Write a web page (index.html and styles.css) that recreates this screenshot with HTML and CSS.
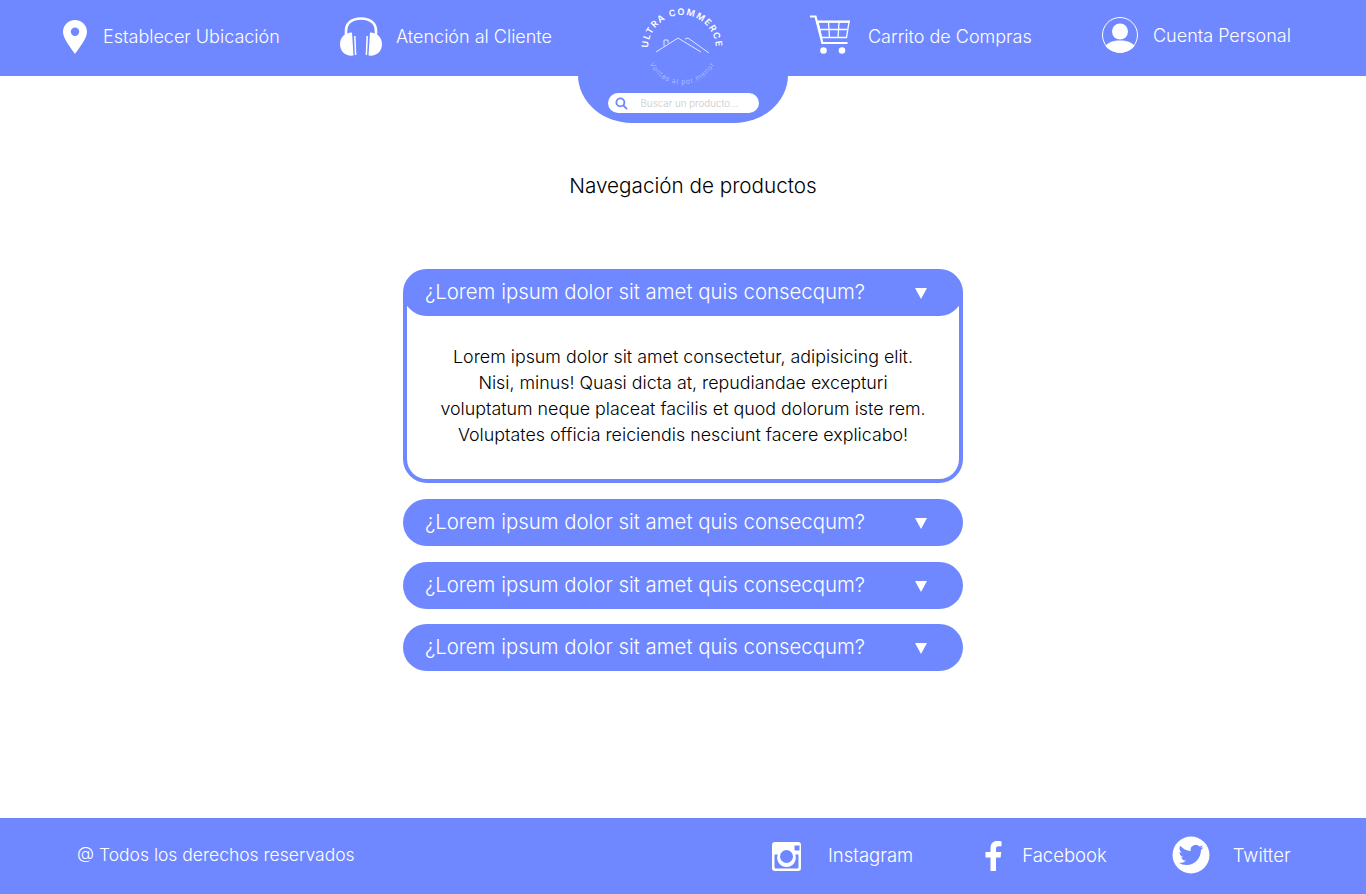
FILE: index.html
```html
<!DOCTYPE html>
<html lang="es">
<head>
  <meta charset="UTF-8">
  <meta name="viewport" content="width=device-width, initial-scale=1.0">
  <title>Ultra Commerce</title>
  <link rel="stylesheet" href="styles.css">
</head>
<body>
  <header class="topbar">
    <a class="topbar-item" href="#">
      <svg class="icon-pin" viewBox="0 0 24 34"><path fill="#fff" fill-rule="evenodd" d="M12 0C5.2 0 0 5.2 0 11.8 0 18.6 7.500 27.500 12 34c4.500-6.500 12-15.400 12-22.200C24 5.200 18.800 0 12 0zm0 7.500a4.200 4.200 0 1 1 0 8.400 4.200 4.200 0 0 1 0-8.400z"/></svg>
      <span>Establecer Ubicación</span>
    </a>
    <a class="topbar-item" href="#">
      <svg class="icon-phones" viewBox="0 0 42 39">
        <path fill="none" stroke="#fff" stroke-width="2.600" d="M6 20V14C6 6 12 1.500 21 1.500S36 6 36 14v6"/>
        <path fill="#fff" d="M12 15.500l1.500 23C5.500 39.500 0 34.500 0 27c0-6.500 5-11.500 12-11.500zM30 15.500l-1.500 23c8 1 13.500-4 13.500-11.500 0-6.500-5-11.500-12-11.500z"/>
        <path fill="none" stroke="#fff" stroke-width="1.500" d="M14.800 19l.8 19M27.200 19l-.8 19"/>
      </svg>
      <span>Atención al Cliente</span>
    </a>
    <div class="brand">
      <svg class="logo" viewBox="0 0 90 82">
        <defs>
          <path id="arcTop" d="M10 45a34 34 0 0 1 68 0"/>
          <path id="arcBottom" d="M10 56a36 36 0 0 0 68 0"/>
        </defs>
        <text class="logo-name"><textPath href="#arcTop" startOffset="50%" text-anchor="middle">ULTRA COMMERCE</textPath></text>
        <text class="logo-tag"><textPath href="#arcBottom" startOffset="50%" text-anchor="middle">Ventas al por menor</textPath></text>
        <path fill="none" stroke="#fff" stroke-width=".8" d="M18 48l22-14 23 14M47 35l3-1 21 15M26 42v-6h4v3"/>
      </svg>
      <div class="search">
        <svg class="icon-search" viewBox="0 0 14 14"><circle cx="5.800" cy="5.800" r="4.300" fill="none" stroke="#6f88ff" stroke-width="2"/><path stroke="#6f88ff" stroke-width="2" stroke-linecap="round" d="M9.200 9.200l3.300 3.300"/></svg>
        <input type="text" placeholder="Buscar un producto...">
      </div>
    </div>
    <a class="topbar-item" href="#">
      <svg class="icon-cart" viewBox="0 0 40 39">
        <path fill="none" stroke="#fff" stroke-width="2.200" d="M0 1.500h5.500l7 27"/>
        <path fill="none" stroke="#fff" stroke-width="1.300" d="M8 7h31l-2.500 15.500H11.500zM18.500 7l1 15.500M29 7l-1 15.500M9.500 14.500h28.500"/>
        <path fill="none" stroke="#fff" stroke-width="2.200" d="M7.500 6.500H40M11.500 28h26"/>
        <circle cx="13.500" cy="35.500" r="3.300" fill="#fff"/><circle cx="32" cy="35.500" r="3.300" fill="#fff"/>
      </svg>
      <span>Carrito de Compras</span>
    </a>
    <a class="topbar-item item-account" href="#">
      <svg class="icon-user" viewBox="0 0 36 36">
        <circle cx="18" cy="18" r="17.500" fill="none" stroke="#fff"/>
        <circle cx="18" cy="14.500" r="8" fill="#fff"/>
        <path fill="#fff" d="M3.500 29c3-4 8-5.500 14.500-5.500S29.500 25 32.500 29c-3 4-8.500 6.500-14.500 6.500S6.500 33 3.500 29z"/>
      </svg>
      <span>Cuenta Personal</span>
    </a>
  </header>

  <main class="content">
    <h1>Navegación de productos</h1>
    <div class="faq">
      <details open>
        <summary>¿Lorem ipsum dolor sit amet quis consecqum?<i class="arrow"></i></summary>
        <p>Lorem ipsum dolor sit amet consectetur, adipisicing elit.<br>Nisi, minus! Quasi dicta at, repudiandae excepturi<br>voluptatum neque placeat facilis et quod dolorum iste rem.<br>Voluptates officia reiciendis nesciunt facere explicabo!</p>
      </details>
      <details>
        <summary>¿Lorem ipsum dolor sit amet quis consecqum?<i class="arrow"></i></summary>
      </details>
      <details>
        <summary>¿Lorem ipsum dolor sit amet quis consecqum?<i class="arrow"></i></summary>
      </details>
      <details>
        <summary>¿Lorem ipsum dolor sit amet quis consecqum?<i class="arrow"></i></summary>
      </details>
    </div>
  </main>

  <footer class="bottombar">
    <span class="rights">@ Todos los derechos reservados</span>
    <a class="social social-ig" href="#">
      <svg viewBox="0 0 29 29"><path fill="#fff" fill-rule="evenodd" d="M3 0h23a3 3 0 0 1 3 3v23a3 3 0 0 1-3 3H3a3 3 0 0 1-3-3V3a3 3 0 0 1 3-3zm19.500 3.500v5h5v-5zM2.500 12.500V25a1.500 1.500 0 0 0 1.500 1.500h21a1.500 1.500 0 0 0 1.500-1.500V12.500h-3.300a9.300 9.300 0 1 1-17.400 0zM14.500 8a6.500 6.500 0 1 0 0 13 6.500 6.500 0 0 0 0-13z"/></svg>
      <span>Instagram</span>
    </a>
    <a class="social social-fb" href="#">
      <svg viewBox="0 0 16 30"><path fill="#fff" d="M5 30V16.500H0V11h5V7c0-4.500 2.800-7 6.800-7 1.900 0 3.200.1 4.200.3v4.900h-2.900c-2.200 0-2.600 1-2.600 2.600V11h5.300l-.7 5.500h-4.600V30z"/></svg>
      <span>Facebook</span>
    </a>
    <a class="social social-tw" href="#">
      <svg viewBox="0 0 38 38"><circle cx="19" cy="19" r="18.500" fill="#fff"/><g transform="translate(6.500 6.500) scale(1.040)"><path fill="#6f88ff" d="M23.953 4.570a10 10 0 0 1-2.825.775 4.958 4.958 0 0 0 2.163-2.723c-.951.555-2.005.959-3.127 1.184a4.920 4.920 0 0 0-8.384 4.482C7.690 8.095 4.067 6.130 1.640 3.162a4.822 4.822 0 0 0-.666 2.475c0 1.710.870 3.213 2.188 4.096a4.904 4.904 0 0 1-2.228-.616v.060a4.923 4.923 0 0 0 3.946 4.827 4.996 4.996 0 0 1-2.212.085 4.936 4.936 0 0 0 4.604 3.417 9.867 9.867 0 0 1-6.102 2.105c-.390 0-.779-.023-1.170-.067a13.995 13.995 0 0 0 7.557 2.209c9.053 0 13.998-7.496 13.998-13.985 0-.210 0-.420-.015-.630A9.935 9.935 0 0 0 24 4.590z"/></g></svg>
      <span>Twitter</span>
    </a>
  </footer>
</body>
</html>
```

FILE: styles.css
```css
* {
  box-sizing: border-box;
}
body {
  font-family: "Inter", "Liberation Sans", sans-serif;
  background-color: #fff;
  margin: 0;
  color: #000;
  min-height: 100vh;
  display: flex;
  flex-direction: column;
}
a {
  color: #fff;
  text-decoration: none;
}

/* top bar */
.topbar {
  height: 75.500px;
  background: #6f88ff;
  padding-left: 62px;
  display: grid;
  grid-template-columns: 278px 238px 232px 292px 1fr;
  font-size: 18px;
  font-weight: 300;
}
.topbar-item {
  display: flex;
  align-items: center;
  height: 72px;
}
.item-account {
  height: 70px;
}
.icon-pin {
  width: 24px;
  height: 34px;
  margin: 2px 16px 0 1px;
}
.icon-phones {
  width: 42px;
  height: 39px;
  margin: 1px 14px 0 0;
}
.icon-cart {
  width: 40px;
  height: 39px;
  margin: 0 18px 4px 0;
}
.icon-user {
  width: 36px;
  height: 36px;
  margin: 0 15px 0 0;
}
.brand {
  width: 210px;
  height: 123px;
  background: #6f88ff;
  border-radius: 0 0 54px 54px / 0 0 48px 48px;
  display: flex;
  flex-direction: column;
  align-items: center;
  position: relative;
}
.logo {
  width: 90px;
  height: 82px;
  margin: 4px 0 0 0;
}
.logo-name {
  font-size: 9px;
  font-weight: 600;
  letter-spacing: 1.400px;
  fill: #fff;
}
.logo-tag {
  font-size: 7px;
  letter-spacing: .8px;
  fill: #b9c6ff;
}
.search {
  width: 151px;
  height: 20px;
  margin-top: 7px;
  background: #fff;
  border-radius: 10px;
  display: flex;
  align-items: center;
  padding-left: 7px;
}
.icon-search {
  width: 13px;
  height: 13px;
  flex: none;
}
.search input {
  border: 0;
  outline: 0;
  padding: 0;
  margin-left: 13px;
  width: 110px;
  font-family: inherit;
  font-size: 9.800px;
  font-weight: 300;
}
.search input::placeholder {
  color: #c9c9c9;
}

/* accordion */
.content {
  flex: 1;
}
.content h1 {
  margin: 97.500px 0 0 20px;
  font-size: 20.700px;
  font-weight: 350;
  line-height: 26px;
  text-align: center;
}
.faq {
  width: 560px;
  margin: 70px auto 0;
  display: flex;
  flex-direction: column;
  gap: 15.250px;
}
.faq summary {
  list-style: none;
  height: 47.250px;
  background: #6f88ff;
  border-radius: 24px;
  padding-left: 22px;
  color: #fff;
  font-size: 20.400px;
  font-weight: 300;
  line-height: 46px;
  position: relative;
  cursor: pointer;
}
.arrow {
  position: absolute;
  right: 36px;
  top: 19px;
  border-left: 6.500px solid transparent;
  border-right: 6.500px solid transparent;
  border-top: 11px solid #fff;
}
.faq p {
  margin: -24px 0 .750px;
  padding: 52px 0 0;
  height: 190.750px;
  border: 4px solid #6f88ff;
  border-top: 0;
  border-radius: 0 0 24px 24px;
  font-size: 17.850px;
  font-weight: 350;
  line-height: 26px;
  text-align: center;
}

/* footer */
.bottombar {
  height: 76px;
  background: #6f88ff;
  padding: 0 0 2px 77px;
  display: flex;
  align-items: center;
  color: #fff;
  font-size: 17.500px;
  font-weight: 300;
}
.rights {
  width: 695px;
  padding-bottom: 2px;
}
.social {
  display: flex;
  align-items: center;
  font-size: 18.500px;
}
.social-ig svg {
  width: 29px;
  height: 29px;
  margin: 2px 27px 0 0;
}
.social-fb {
  margin-left: 72px;
}
.social-fb svg {
  width: 17px;
  height: 30px;
  margin: 2px 20px 0 0;
}
.social-tw {
  margin-left: 65px;
}
.social-tw svg {
  width: 38px;
  height: 38px;
  margin-right: 23px;
}
```
